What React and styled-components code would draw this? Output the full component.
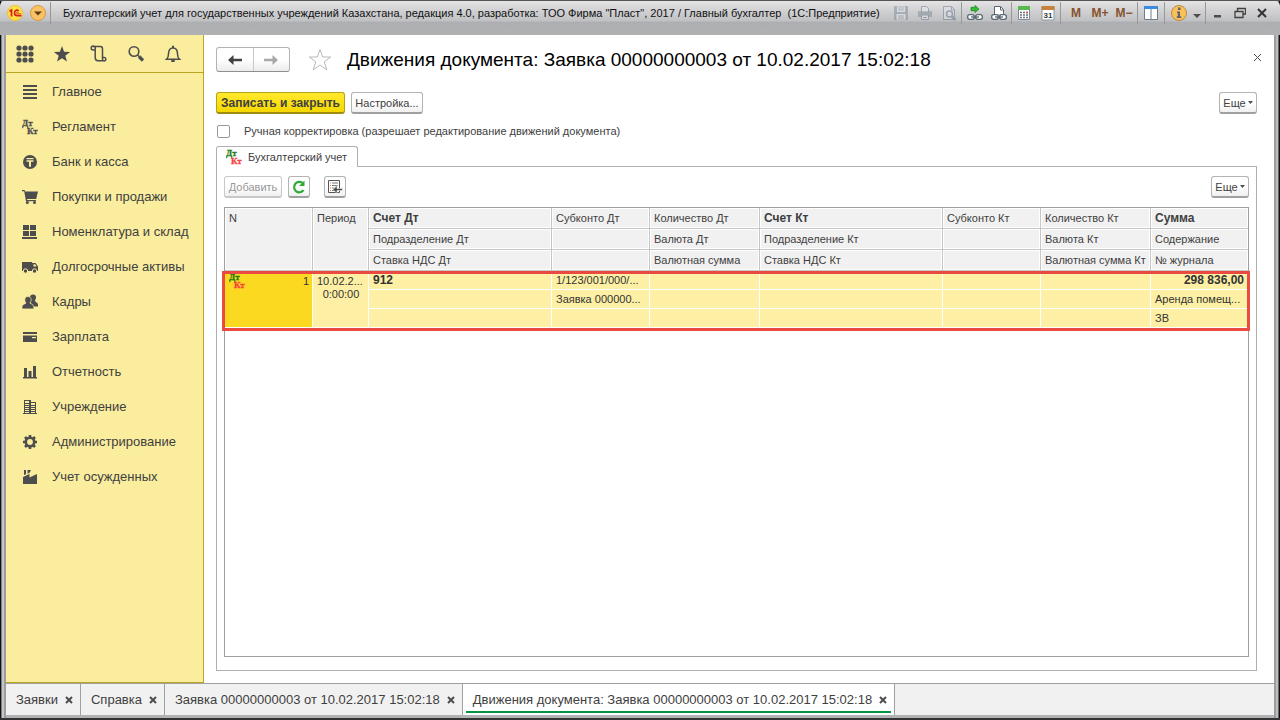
import React from "react";
import styled, { createGlobalStyle } from "styled-components";

const GlobalStyle = createGlobalStyle`
  * {
    box-sizing: border-box;
  }
  body {
    margin: 0;
    font-family: "Liberation Sans", Arial, sans-serif;
    font-size: 11px;
    color: #404040;
  }
  button {
    font-family: inherit;
    font-size: inherit;
    color: inherit;
    padding: 0;
    margin: 0;
    cursor: pointer;
  }
  svg {
    display: block;
    flex: none;
  }
`;

/* ---------- window frame ---------- */

const Window = styled.div`
  display: flex;
  flex-direction: column;
  min-height: 100vh;
  padding: 0 6px 3px;
  background: linear-gradient(
    to right,
    #111 0 1px,
    #808184 1px 2px,
    #c4c5c7 2px 4px,
    #9c9da0 4px 6px,
    #b2b3b5 6px calc(100% - 6px),
    #9c9da0 calc(100% - 6px) calc(100% - 4px),
    #bcbdbf calc(100% - 4px) calc(100% - 2px),
    #111 calc(100% - 1px)
  );
  border-bottom: 2px solid #333;
  border-top: 1px solid #555;
`;

const TitleBar = styled.header`
  display: flex;
  align-items: center;
  height: 34px;
  margin: 0 -6px;
  padding: 0 7px 10px 4px;
  border-radius: 5px 5px 0 0;
  background: linear-gradient(
    to bottom,
    #e4e4e5 0,
    #cfcfd1 11px,
    #c0c1c3 20px,
    #aeafb2 21px,
    #b0b1b3 100%
  );
`;

const TitleIcon = styled.button`
  display: flex;
  align-items: center;
  justify-content: center;
  width: ${(props) => props.$width || 24}px;
  height: 22px;
  border: 0;
  background: none;
  opacity: ${(props) => (props.$dim ? 0.5 : 1)};
  color: ${(props) => props.$color || "#404040"};
  font-size: 12px;
  font-weight: bold;
`;

const TitleGroup = styled.div`
  display: flex;
  padding-left: ${(props) => props.$gap || 0}px;
  padding-right: ${(props) => props.$end || 0}px;
  border-left: 1px solid ${(props) => (props.$plain ? "transparent" : "#97989a")};
`;

const WindowTitle = styled.div`
  flex: 1;
  min-width: 0;
  padding-left: 9px;
  overflow: hidden;
  color: #111;
  white-space: pre;
`;

const Body = styled.div`
  display: flex;
  flex: 1;
`;

/* ---------- sidebar ---------- */

const Sidebar = styled.aside`
  flex: none;
  width: 198px;
  background: #fbed9e;
  border-right: 1px solid #b9a51f;
  border-bottom: 1px solid #b9a51f;
`;

const SideTools = styled.div`
  display: flex;
  height: 38px;
  border-bottom: 1px solid #b9a51f;
`;

const SideTool = styled.button`
  display: flex;
  align-items: center;
  justify-content: center;
  width: 37px;
  border: 0;
  background: none;
`;

const SideNav = styled.nav`
  display: flex;
  flex-direction: column;
  padding-top: 1px;
`;

const SideLink = styled.a`
  display: flex;
  align-items: center;
  gap: 14px;
  height: 35px;
  padding-left: 16px;
  color: #404040;
  font-size: 13px;
  text-decoration: none;
`;

/* ---------- document form ---------- */

const Main = styled.main`
  display: flex;
  flex-direction: column;
  flex: 1;
  min-width: 0;
  padding: 12px 17px 12px 12px;
  background: #fff;
`;

const Heading = styled.div`
  display: flex;
  align-items: center;
  height: 26px;
  margin-right: -5px;
`;

const NavButtons = styled.div`
  display: flex;
  align-self: flex-start;
  width: 74px;
  height: 25px;
  margin-right: 18px;
  border: 1px solid #b3b3b3;
  border-bottom-color: #8f8f8f;
  border-radius: 3px;
  background: linear-gradient(#fff 50%, #ececec);
`;

const NavButton = styled.button`
  display: flex;
  flex: 1;
  align-items: center;
  justify-content: center;
  border: 0;
  background: none;
  & + & {
    border-left: 1px solid #c8c8c8;
  }
`;

const PlainButton = styled.button`
  display: flex;
  align-items: center;
  justify-content: center;
  border: 0;
  background: none;
`;

const FormClose = styled(PlainButton)`
  align-self: flex-start;
  height: 20px;
`;

const Title = styled.h1`
  flex: 1;
  margin: 0 0 0 15px;
  color: #000;
  font-size: 19px;
  font-weight: normal;
  line-height: 26px;
  white-space: nowrap;
`;

const Commands = styled.div`
  display: flex;
  justify-content: space-between;
  margin-top: ${(props) => props.$top}px;
`;

const CommandGroup = styled.div`
  display: flex;
  gap: 6px;
`;

const Button = styled.button`
  display: flex;
  align-items: center;
  justify-content: center;
  gap: 2px;
  width: ${(props) => (props.$width ? props.$width + "px" : "auto")};
  height: 22px;
  margin-left: ${(props) => props.$left || 0}px;
  border: 1px solid #b3b3b3;
  border-bottom: 2px solid #a0a0a0;
  border-radius: 3px;
  background: linear-gradient(#fff 50%, #f0f0f0);
  white-space: nowrap;
  &:disabled {
    color: #999;
    border-color: #c8c8c8;
    cursor: default;
  }
`;

const PrimaryButton = styled(Button)`
  border-color: #b8a21b;
  border-bottom-color: #a08c10;
  background: linear-gradient(#ffe92e, #f5d800);
  font-size: 12px;
  font-weight: bold;
`;

const CheckRow = styled.label`
  display: flex;
  align-items: center;
  gap: 14px;
  height: 14px;
  margin: 10px 0 8px 1px;
`;

const CheckBox = styled.input`
  appearance: none;
  width: 13px;
  height: 13px;
  margin: 0;
  border: 1px solid #999;
  border-radius: 2px;
  background: #fff;
  &:checked {
    background: #b9a51f;
  }
`;

const FormTabs = styled.div`
  display: flex;
  margin-bottom: -1px;
`;

const FormTab = styled.button`
  display: flex;
  align-items: center;
  gap: 6px;
  width: 142px;
  height: 21px;
  padding: 0 0 0 9px;
  border: 1px solid #b0b0b0;
  border-bottom: 0;
  border-radius: 3px 3px 0 0;
  background: #fff;
  white-space: nowrap;
  z-index: 1;
`;

const Panel = styled.section`
  display: flex;
  flex-direction: column;
  flex: 1;
  padding: 0 7px 13px;
  border: 1px solid #b0b0b0;
`;

const TableBox = styled.div`
  flex: 1;
  margin-top: 9px;
  border: 1px solid #a0a0a0;
`;

/* ---------- postings table ---------- */

const Table = styled.table`
  width: 100%;
  table-layout: fixed;
  border-collapse: separate;
  border-spacing: 0;
`;

const HeadCell = styled.th`
  height: 21px;
  padding: 0 0 0 4px;
  border-right: 1px solid #c6c6c6;
  border-bottom: 1px solid #c6c6c6;
  background: #f1f1f1;
  box-shadow: inset 0 0 0 1px #fff;
  font-size: ${(props) => (props.$strong ? 12 : 11)}px;
  line-height: 20px;
  font-weight: ${(props) => (props.$strong ? "bold" : "normal")};
  text-align: left;
  vertical-align: top;
  white-space: nowrap;
  &:last-child {
    border-right: 0;
  }
`;

const Rows = styled.tbody`
  position: relative;
  &::after {
    content: "";
    position: absolute;
    inset: 0 -2px -3px -3px;
    border: 3px solid #e94b43;
    pointer-events: none;
  }
`;

const Cell = styled.td`
  height: 19px;
  padding: 1px 3px 0 4px;
  border-right: 1px solid #fff;
  border-bottom: 1px solid #fff;
  background: #fdf0a4;
  color: #333;
  font-size: ${(props) => (props.$strong ? 12 : 11)}px;
  line-height: 17px;
  font-weight: ${(props) => (props.$strong ? "bold" : "normal")};
  text-align: ${(props) => props.$align || "left"};
  vertical-align: top;
  white-space: nowrap;
`;

const CurrentCell = styled(Cell)`
  background: #fbd920;
`;

const NumberLine = styled.div`
  display: flex;
  justify-content: space-between;
  padding-top: 1px;
`;

const PeriodLine = styled.div`
  line-height: 13px;
  text-align: ${(props) => props.$align || "left"};
  &:first-child {
    padding-top: 3px;
  }
`;

/* ---------- open windows ---------- */

const TaskBar = styled.footer`
  display: flex;
  height: 32px;
  border-top: 1px solid #a0a0a0;
  background: #f1f1f1;
`;

const Task = styled.div`
  display: flex;
  align-items: center;
  gap: 7px;
  padding: 0 7px 0 10px;
  border-right: 1px solid #a0a0a0;
  background: ${(props) => (props.$active ? "#fff" : "none")};
  position: relative;
  &::after {
    content: "";
    display: ${(props) => (props.$active ? "block" : "none")};
    position: absolute;
    inset: auto 3px 2px;
    height: 2px;
    background: #009646;
  }
`;

const TaskName = styled.button`
  border: 0;
  background: none;
  font-size: 13px;
  white-space: nowrap;
`;

/* ---------- icons ---------- */

const Svg = ({ w = 16, h = 16, children, ...rest }) => (
  <svg width={w} height={h} viewBox={`0 0 ${w} ${h}`} fill="#4d4d4d" aria-hidden="true" {...rest}>
    {children}
  </svg>
);

const Logo = () => (
  <Svg w={22} h={20}>
    <circle cx="11" cy="10" r="7.500" fill="#ffe14a" stroke="#f2c12e" />
    <path d="M5.500 8.200 7.500 7v6.500M14.500 8c-1-1.500-4-1-4 2 0 2 1.500 2.700 3 2.700h4" fill="none" stroke="#d8201a" strokeWidth="1.700" />
    <path d="M14.500 9.500c-1-1-2-.5-2 .5s1 .8 4.500.8" fill="none" stroke="#d8201a" strokeWidth=".8" />
  </Svg>
);

const MenuCircle = () => (
  <Svg w={20} h={20}>
    <circle cx="10" cy="10" r="7.500" fill="#fac267" stroke="#d99a3c" />
    <path d="M6 8.500h8L10 12.500z" fill="#5c3c14" />
  </Svg>
);

const DtKt = ({ top = "#4d4d4d", bottom = "#4d4d4d" }) => (
  <Svg fontFamily="Liberation Serif, serif" fontWeight="bold" fontSize="9">
    <text x="0" y="7" fill={top} stroke={top} strokeWidth=".3">Дт</text>
    <text x="5" y="15" fill={bottom} stroke={bottom} strokeWidth=".3">Кт</text>
  </Svg>
);

const Cross = ({ size = 8, weight = 2, color = "#4d4d4d" }) => (
  <Svg w={size} h={size} fill="none" stroke={color} strokeWidth={weight}>
    <path d={`M1 1 ${size - 1} ${size - 1}M${size - 1} 1 1 ${size - 1}`} />
  </Svg>
);

const Caret = () => (
  <Svg w={5} h={3}>
    <path d="M0 0h5L2.500 3z" />
  </Svg>
);

const GridIcon = () => (
  <Svg w={18} h={18}>
    {[3, 9, 15].map((y) => [3, 9, 15].map((x) => <circle key={x + "-" + y} cx={x} cy={y} r="2.600" />))}
  </Svg>
);

const StarIcon = () => (
  <Svg w={18} h={18}>
    <path d="M9 1l2.100 5.800 6 .2-4.800 3.700 1.700 5.900L9 13.200l-5 3.400 1.700-5.900L.9 7l6-.2z" />
  </Svg>
);

const HistoryIcon = () => (
  <Svg w={18} h={18} fill="none" stroke="#4d4d4d" strokeWidth="1.500">
    <path d="M5 5H3.200a2 2 0 1 1 2-2v9.500c0 2 1 3.200 2.800 3.200h6.500M3.200 1.500h7.300c1.500 0 2 1 2 2.500v8.500M12.500 12.500h1.800a1.700 1.700 0 1 1-1.800 1.800z" />
  </Svg>
);

const SearchIcon = () => (
  <Svg w={18} h={18} fill="none" stroke="#4d4d4d">
    <circle cx="7" cy="6.500" r="4.800" strokeWidth="1.600" />
    <path d="M10.500 10l1.500 1.500" strokeWidth="1.500" />
    <path d="M12 11.500l4 4" strokeWidth="3.200" />
  </Svg>
);

const BellIcon = () => (
  <Svg w={18} h={18} fill="none" stroke="#4d4d4d" strokeWidth="1.500">
    <path d="M2.500 14.200c1.500-1.300 2-2.500 2-5.200 0-3.500 1.500-6 4.500-6s4.500 2.500 4.500 6c0 2.700.5 3.900 2 5.200z" />
    <path d="M9 3V.8M7.300 16h3.400" strokeWidth="2" />
  </Svg>
);

const ListIcon = () => (
  <Svg>
    <path d="M1 1h14v2H1zM1 5h14v2H1zM1 9h14v2H1zM1 13h14v2H1z" />
  </Svg>
);

const TengeIcon = () => (
  <Svg>
    <circle cx="8" cy="8" r="7" />
    <path d="M4.500 4h7v1.200h-7zM4.500 6.200h7v1.600H9v5H7v-5H4.500z" fill="#fbed9e" />
  </Svg>
);

const CartIcon = () => (
  <Svg>
    <path d="M0 1h2.500l.7 1.500H16L14.200 10H5l.2 1H14v1.300H4L2.200 2.300H0z" />
    <circle cx="5.300" cy="13.500" r="1.500" />
    <circle cx="12.500" cy="13.500" r="1.500" />
  </Svg>
);

const StockIcon = () => (
  <Svg>
    <path d="M1 1h6v5H1zM8 1h6v5H8zM1 7h6v5H1zM8 7h6v5H8zM0 13h15v2H0z" />
  </Svg>
);

const TruckIcon = () => (
  <Svg>
    <path d="M0 3h10v9H0zM10 4h3.500L16 7.500V12h-6z" />
    <path d="M11.500 5.200h1.600L14.600 7.500h-3.100z" fill="#fbed9e" />
    <circle cx="3.500" cy="12" r="2.200" stroke="#fbed9e" />
    <circle cx="12.500" cy="12" r="2.200" stroke="#fbed9e" />
  </Svg>
);

const PeopleIcon = () => (
  <Svg>
    <circle cx="11" cy="3.500" r="3" />
    <path d="M9 6h4c0 3 3 2 3 4.500v2H9z" />
    <path d="M6 2.500c2 0 3.200 1.400 3.200 3.400 0 1.300-.5 2.300-1.200 3 .2 1.200 3.800 1 3.800 4v2H0v-2c0-3 3.800-2.800 4-4C3.200 8.200 2.800 7.200 2.800 5.900c0-2 1.200-3.400 3.200-3.400z" stroke="#fbed9e" strokeWidth=".7" />
  </Svg>
);

const CardIcon = () => (
  <Svg>
    <path d="M1 3h14v2H1zM1 6.500h14V13H1z" />
    <path d="M10 8h4v1.200h-4z" fill="#fbed9e" />
  </Svg>
);

const ChartIcon = () => (
  <Svg>
    <path d="M2 4h3v9H2zM6.500 7h3v6h-3zM11 2h3v11h-3zM1 13h14v1.500H1z" />
  </Svg>
);

const BuildingIcon = () => (
  <Svg fill="none" stroke="#4d4d4d" shapeRendering="crispEdges">
    <path d="M2.500 14V1.500h6V14M8.500 3.500h5V14M2 4.500h6M2 6.500h6M2 8.500h6M2 10.500h6M2 12.500h6M9 6.500h4M9 8.500h4M9 10.500h4M9 12.500h4M1 14.500h14" />
    <path d="M8 1v13" strokeWidth="2" />
  </Svg>
);

const GearIcon = () => (
  <Svg>
    <circle cx="8" cy="8" r="4.200" fill="none" stroke="#4d4d4d" strokeWidth="2.600" />
    <path d="M8 1v3M8 12v3M1 8h3M12 8h3M3 3l2 2M11 11l2 2M13 3l-2 2M5 11l-2 2" stroke="#4d4d4d" strokeWidth="2.600" />
  </Svg>
);

const FactoryIcon = () => (
  <Svg>
    <path d="M1 8l6.500-3v3.500L15 5v10H1z" />
    <path d="M2 1h2v4.200L2 6zM5.500 1H9L7.500 3.800 5.500 4.800z" />
  </Svg>
);

const Arrow = ({ color, flip }) => (
  <Svg w={16} h={12} fill={color}>
    <path d={flip ? "M15 6 9.500 1v3.700H1v2.600h8.500V11z" : "M1 6l5.500-5v3.700H15v2.600H6.500V11z"} />
  </Svg>
);

const OutlineStar = () => (
  <Svg w={24} h={24} fill="#fff" stroke="#b5b9bd">
    <path d="M12 1.500l2.700 7.500h8l-6.400 4.800 2.400 8L12 17l-6.700 4.800 2.400-8L1.300 9h8z" />
  </Svg>
);

const RefreshIcon = () => (
  <Svg fill="none" stroke="#2fa836" strokeWidth="2.200">
    <path d="M12.500 11.200A5.200 5.200 0 1 1 11.500 4" />
    <path d="M13.500 1.500v5.500H8z" fill="#2fa836" stroke="none" />
  </Svg>
);

const JournalIcon = () => (
  <Svg>
    <path d="M1.500 1.500h11v12h-11z" fill="#fff" stroke="#555" />
    <path d="M3 4h1M3 6.500h1M3 9h1M3 11.500h1" stroke="#e07030" />
    <path d="M5 4h6M5 6.500h6M5 9h2M5 11.500h3" stroke="#777" />
    <path d="M6 10.500 10 6.500v3h5.500v2H10v3z" stroke="#fff" strokeWidth=".5" />
  </Svg>
);

const SaveIcon = () => (
  <Svg>
    <path d="M1 1h14v14H1z" fill="#7f8b99" />
    <path d="M4 1.500h8v5.500H4zM3.500 9h9v5.500h-9z" fill="#e6e9ec" />
    <path d="M5 3h6M5 5h6M5 11h6M5 13h6" stroke="#7f8b99" />
  </Svg>
);

const PrinterIcon = () => (
  <Svg>
    <path d="M1 6h14v6H1z" fill="#7f8b99" />
    <path d="M4.500 7V1.500h5l2 2V7zM4.500 10h7v4.500h-7z" fill="#e6e9ec" stroke="#667588" />
    <path d="M6 12.500h4" stroke="#667588" />
  </Svg>
);

const PreviewIcon = () => (
  <Svg fill="none" stroke="#667588" strokeWidth="1.500">
    <path d="M2.500 1.500h8l3 3v10h-11z" fill="#e0e3e7" strokeWidth="1" />
    <path d="M10.500 2v3h3" strokeWidth="1" />
    <circle cx="8.500" cy="9" r="3" />
    <path d="M10.500 11l4 4" strokeWidth="2.500" />
  </Svg>
);

const Chain = () => (
  <>
    <rect x="1.700" y="9.700" width="6.600" height="4.600" rx="2" fill="#fff" />
    <rect x="9.700" y="9.700" width="6.600" height="4.600" rx="2" fill="#fff" />
    <path d="M5 12h8" />
  </>
);

const LinkAddIcon = () => (
  <Svg w={18} h={16} fill="none" stroke="#596570" strokeWidth="1.300">
    <path d="M5 2.300h4V.5l4 3.500-4 3.500V5.700H5z" fill="#2fbf30" stroke="#16801b" strokeWidth=".7" />
    <Chain />
  </Svg>
);

const LinkPageIcon = () => (
  <Svg w={18} h={16} fill="none" stroke="#596570" strokeWidth="1.300">
    <path d="M4.500 9V1.500h6l3 3V9" fill="#fff" strokeWidth="1" />
    <path d="M10.500 2v3h3" strokeWidth="1" />
    <Chain />
  </Svg>
);

const CalculatorIcon = () => (
  <Svg>
    <path d="M2.500 1.500h11v13h-11z" fill="#fff" stroke="#7c8b96" />
    <path d="M2 1h12v4H2z" fill="#55b94d" />
    <path d="M4 7.500h8M4 10h8M4 12.500h8" stroke="#6b757f" strokeDasharray="2 1" strokeWidth="1.500" />
    <path d="M10 7.500h2" stroke="#d8504a" strokeWidth="1.500" />
  </Svg>
);

const CalendarIcon = () => (
  <Svg>
    <path d="M2 2h12v13H2z" fill="#fff" stroke="#8796a3" />
    <path d="M1.500 1h13v4h-13z" fill="#c8813c" />
    <text x="8" y="13" textAnchor="middle" fontSize="8" fontFamily="Liberation Sans, sans-serif" fill="#2f3a44">31</text>
  </Svg>
);

const SplitIcon = () => (
  <Svg>
    <path d="M1.500 1.500h13v13h-13z" fill="#fff" stroke="#6d7d8c" />
    <path d="M1 1h14v3H1z" fill="#3d8be0" />
    <path d="M8 4v10" stroke="#6d7d8c" />
  </Svg>
);

const InfoIcon = () => (
  <Svg w={18} h={18}>
    <circle cx="9" cy="9" r="7.500" fill="#fac15a" stroke="#bd8a3e" />
    <path d="M8 3.500h2.500V6H8zM7 7.500h3v4.700h1.300V14H6.800v-1.800h1V9H7z" fill="#5f6570" />
  </Svg>
);

const MinimizeIcon = () => (
  <Svg w={12} h={12}>
    <path d="M2 8h7v2.500H2z" />
  </Svg>
);

const RestoreIcon = () => (
  <Svg w={12} h={12} fill="none" stroke="#404040" strokeWidth="1.300">
    <path d="M3.500 4V1.500h8V7H9" />
    <path d="M1 4.500h8v6H1z" />
  </Svg>
);

/* ---------- data ---------- */

const sections = [
  ["Главное", ListIcon],
  ["Регламент", DtKt],
  ["Банк и касса", TengeIcon],
  ["Покупки и продажи", CartIcon],
  ["Номенклатура и склад", StockIcon],
  ["Долгосрочные активы", TruckIcon],
  ["Кадры", PeopleIcon],
  ["Зарплата", CardIcon],
  ["Отчетность", ChartIcon],
  ["Учреждение", BuildingIcon],
  ["Администрирование", GearIcon],
  ["Учет осужденных", FactoryIcon],
];

const tools = [
  ["Меню", GridIcon],
  ["Избранное", StarIcon],
  ["История", HistoryIcon],
  ["Поиск", SearchIcon],
  ["Оповещения", BellIcon],
];

const columnWidths = [88, 56, 183, 98, 110, 183, 98, 110, 97];

const headRows = [
  ["Счет Дт", "Субконто Дт", "Количество Дт", "Счет Кт", "Субконто Кт", "Количество Кт", "Сумма"],
  ["Подразделение Дт", "", "Валюта Дт", "Подразделение Кт", "", "Валюта Кт", "Содержание"],
  ["Ставка НДС Дт", "", "Валютная сумма", "Ставка НДС Кт", "", "Валютная сумма Кт", "№ журнала"],
];

const postingRows = [
  ["912", "1/123/001/000/...", "", "", "", "", "298 836,00"],
  ["", "Заявка 000000...", "", "", "", "", "Аренда помещ..."],
  ["", "", "", "", "", "", "ЗВ"],
];

const strongHeads = ["Счет Дт", "Счет Кт", "Сумма"];

const tasks = [
  "Заявки",
  "Справка",
  "Заявка 00000000003 от 10.02.2017 15:02:18",
  "Движения документа: Заявка 00000000003 от 10.02.2017 15:02:18",
];

const AppTitleBar = () => (
  <TitleBar>
    <TitleIcon $width={22} aria-label="1С"><Logo /></TitleIcon>
    <TitleIcon aria-label="Главное меню"><MenuCircle /></TitleIcon>
    <TitleGroup $gap={2}><TitleIcon as="span" $width={1} /></TitleGroup>
    <WindowTitle>
      {'Бухгалтерский учет для государственных учреждений Казахстана, редакция 4.0, разработка: ТОО Фирма "Пласт", 2017 / Главный бухгалтер  (1С:Предприятие)'}
    </WindowTitle>
    <TitleGroup $plain>
      <TitleIcon $dim aria-label="Сохранить"><SaveIcon /></TitleIcon>
      <TitleIcon $dim aria-label="Печать"><PrinterIcon /></TitleIcon>
      <TitleIcon $dim aria-label="Просмотр"><PreviewIcon /></TitleIcon>
    </TitleGroup>
    <TitleGroup $gap={1}>
      <TitleIcon aria-label="Получить ссылку"><LinkAddIcon /></TitleIcon>
      <TitleIcon aria-label="Перейти по ссылке"><LinkPageIcon /></TitleIcon>
    </TitleGroup>
    <TitleGroup>
      <TitleIcon aria-label="Калькулятор"><CalculatorIcon /></TitleIcon>
      <TitleIcon aria-label="Календарь"><CalendarIcon /></TitleIcon>
    </TitleGroup>
    <TitleGroup $gap={3} $end={1}>
      <TitleIcon $color="#85522c">M</TitleIcon>
      <TitleIcon $color="#85522c">M+</TitleIcon>
      <TitleIcon $color="#85522c">M−</TitleIcon>
    </TitleGroup>
    <TitleGroup $gap={1} $end={1}>
      <TitleIcon aria-label="Панели"><SplitIcon /></TitleIcon>
    </TitleGroup>
    <TitleGroup $gap={2} $end={2}>
      <TitleIcon aria-label="Справка"><InfoIcon /></TitleIcon>
      <TitleIcon $width={12} aria-label="Еще">
        <Svg w={8} h={10}><path d="M0 6h8L4 10z" /></Svg>
      </TitleIcon>
    </TitleGroup>
    <TitleGroup $gap={1}>
      <TitleIcon $width={22} aria-label="Свернуть"><MinimizeIcon /></TitleIcon>
      <TitleIcon $width={22} aria-label="Развернуть"><RestoreIcon /></TitleIcon>
      <TitleIcon $width={22} aria-label="Закрыть"><Cross size={10} color="#333" /></TitleIcon>
    </TitleGroup>
  </TitleBar>
);

const PostingsTable = () => (
  <Table>
    <colgroup>
      {columnWidths.map((width, i) => (
        <col key={i} width={width} />
      ))}
    </colgroup>
    <thead>
      {headRows.map((row, i) => (
        <tr key={i}>
          {i === 0 && <HeadCell rowSpan={3}>N</HeadCell>}
          {i === 0 && <HeadCell rowSpan={3}>Период</HeadCell>}
          {row.map((text, j) => (
            <HeadCell key={j} $strong={strongHeads.includes(text)}>{text}</HeadCell>
          ))}
        </tr>
      ))}
    </thead>
    <Rows>
      {postingRows.map((row, i) => (
        <tr key={i}>
          {i === 0 && (
            <CurrentCell rowSpan={3}>
              <NumberLine>
                <DtKt top="#1d7a12" bottom="#fa4040" />
                1
              </NumberLine>
            </CurrentCell>
          )}
          {i === 0 && (
            <Cell rowSpan={3}>
              <PeriodLine>10.02.2...</PeriodLine>
              <PeriodLine $align="center">0:00:00</PeriodLine>
            </Cell>
          )}
          {row.map((text, j) => (
            <Cell key={j} $strong={i === 0 && (j === 0 || j === 6)} $align={i === 0 && j === 6 ? "right" : "left"}>
              {text}
            </Cell>
          ))}
        </tr>
      ))}
    </Rows>
  </Table>
);

const App = () => {
  return (
    <Window>
      <GlobalStyle />
      <AppTitleBar />
      <Body>
        <Sidebar>
          <SideTools>
            {tools.map(([name, Icon]) => (
              <SideTool key={name} aria-label={name}><Icon /></SideTool>
            ))}
          </SideTools>
          <SideNav>
            {sections.map(([name, Icon]) => (
              <SideLink key={name} href="#"><Icon />{name}</SideLink>
            ))}
          </SideNav>
        </Sidebar>
        <Main>
          <Heading>
            <NavButtons>
              <NavButton aria-label="Назад"><Arrow color="#404040" /></NavButton>
              <NavButton aria-label="Вперед"><Arrow color="#a8a8a8" flip /></NavButton>
            </NavButtons>
            <PlainButton aria-label="В избранное"><OutlineStar /></PlainButton>
            <Title>Движения документа: Заявка 00000000003 от 10.02.2017 15:02:18</Title>
            <FormClose aria-label="Закрыть форму"><Cross size={9} weight={1} /></FormClose>
          </Heading>
          <Commands $top={19}>
            <CommandGroup>
              <PrimaryButton $width={129}>Записать и закрыть</PrimaryButton>
              <Button $width={72}>Настройка...</Button>
            </CommandGroup>
            <Button $width={38}>Еще<Caret /></Button>
          </Commands>
          <CheckRow>
            <CheckBox type="checkbox" />
            Ручная корректировка (разрешает редактирование движений документа)
          </CheckRow>
          <FormTabs>
            <FormTab><DtKt top="#1d7a12" bottom="#fa4040" />Бухгалтерский учет</FormTab>
          </FormTabs>
          <Panel>
            <Commands $top={9}>
              <CommandGroup>
                <Button $width={58} disabled>Добавить</Button>
                <Button $width={22} aria-label="Обновить"><RefreshIcon /></Button>
                <Button $width={22} $left={8} aria-label="Журнал"><JournalIcon /></Button>
              </CommandGroup>
              <Button $width={38}>Еще<Caret /></Button>
            </Commands>
            <TableBox>
              <PostingsTable />
            </TableBox>
          </Panel>
        </Main>
      </Body>
      <TaskBar>
        {tasks.map((name, i) => (
          <Task key={name} $active={i === 3}>
            <TaskName>{name}</TaskName>
            <PlainButton aria-label={"Закрыть: " + name}><Cross /></PlainButton>
          </Task>
        ))}
      </TaskBar>
    </Window>
  );
};

export default App;
